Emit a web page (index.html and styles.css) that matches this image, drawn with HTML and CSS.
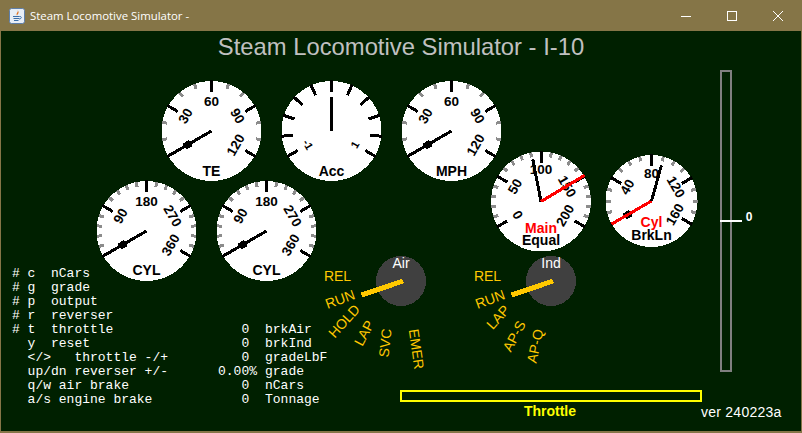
FILE: index.html
```html
<!DOCTYPE html>
<html lang="en">
<head>
  <meta charset="UTF-8">
  <title>Steam Locomotive Simulator</title>
  <link rel="stylesheet" href="styles.css">
</head>
<body>

<div class="window">
  <div class="titlebar">
    <svg class="app-icon" width="16" height="16" viewBox="0 0 16 16">
      <rect x="0.5" y="0.5" width="15" height="15" rx="2" fill="#e8eef6" stroke="#5f7fa8"/>
      <path d="M8.5 2 C10 4 6.5 5 8 7.5 C8.5 6 11 5 8.5 2 Z" fill="#e0701c"/>
      <path d="M4 8.5 H10.5 M4.5 10.5 H10 M5 12.5 H9.5" stroke="#3c6ea8" stroke-width="1.2" fill="none"/>
      <path d="M10.5 8.5 C13 8 13 11 10 11" stroke="#3c6ea8" fill="none"/>
    </svg>
    <span class="app-title">Steam Locomotive Simulator -</span>
    <div class="win-buttons">
      <svg width="12" height="12" viewBox="0 0 12 12"><path d="M1 6.5 H11" stroke="#fff" fill="none"/></svg>
      <svg width="12" height="12" viewBox="0 0 12 12"><rect x="1.5" y="1.5" width="9" height="9" stroke="#fff" fill="none"/></svg>
      <svg width="12" height="12" viewBox="0 0 12 12"><path d="M1 1 L11 11 M11 1 L1 11" stroke="#fff" fill="none"/></svg>
    </div>
  </div>

  <div class="panel">
    <svg id="dials" class="dials" width="800" height="400" viewBox="1 31 800 400"></svg>

    <div class="keys">
      <span># c  nCars</span><span></span><span></span>
      <span># g  grade</span><span></span><span></span>
      <span># p  output</span><span></span><span></span>
      <span># r  reverser</span><span></span><span></span>
      <span># t  throttle</span><span class="val">0 </span><span>brkAir</span>
      <span>  y  reset</span><span class="val">0 </span><span>brkInd</span>
      <span>  &lt;/&gt;   throttle -/+</span><span class="val">0 </span><span>gradeLbF</span>
      <span>  up/dn reverser +/-</span><span class="val">0.00%</span><span>grade</span>
      <span>  q/w air brake</span><span class="val">0 </span><span>nCars</span>
      <span>  a/s engine brake</span><span class="val">0 </span><span>Tonnage</span>
    </div>
  </div>
</div>

<script>
const svg = document.getElementById("dials");
let out = '';

function polar(cx, cy, r, deg) {
  const a = deg * Math.PI / 180;
  return [cx + r * Math.sin(a), cy - r * Math.cos(a)];
}

function line(x1, y1, x2, y2, color, w) {
  return `<line class="crisp" x1="${x1}" y1="${y1}" x2="${x2}" y2="${y2}" stroke="${color}" stroke-width="${w}"/>`;
}

function text(x, y, str, cls, rot) {
  const t = rot ? ` transform="rotate(${rot} ${x} ${y})"` : '';
  return `<text class="${cls}" x="${x}" y="${y}"${t}>${str}</text>`;
}

function needle(g, deg, len, color, blob) {
  const p = polar(g.x, g.y, len, deg);
  let s = line(g.x, g.y, p[0], p[1], color, 3);
  if (blob) {
    const a = polar(g.x, g.y, 24, deg), b = polar(g.x, g.y, 31, deg);
    s += line(a[0], a[1], b[0], b[1], color, 7);
  }
  return s;
}

function gauge(g) {
  const r = g.r || 50;
  let s = `<circle class="crisp" cx="${g.x}" cy="${g.y}" r="${r}" fill="#fff"/>`;

  // gri ara çizgiler
  if (g.minor) {
    for (let d = -120; d <= 120; d += g.minor) {
      if (d % 60 === 0) continue;
      const a = polar(g.x, g.y, r, d), b = polar(g.x, g.y, r - 5, d);
      s += line(a[0], a[1], b[0], b[1], '#8c8c8c', 3);
    }
  }
  (g.major || [-120, -60, 0, 60, 120]).forEach(d => {
    const a = polar(g.x, g.y, r + 1, d), b = polar(g.x, g.y, r - 11, d);
    s += line(a[0], a[1], b[0], b[1], '#000', 3);
  });

  (g.labels || []).forEach(l => {
    const p = polar(g.x, g.y, l[2] || g.labelR || 30, l[0]);
    const rot = Math.abs(l[0]) > 90 ? l[0] - Math.sign(l[0]) * 180 : l[0];
    s += text(p[0], p[1], l[1], g.smallLabels ? 'dial-num small' : 'dial-num', rot);
  });

  (g.needles || []).forEach(n => { s += needle(g, n[0], n[1], n[2], n[3]); });
  (g.captions || []).forEach(c => { s += text(g.x, c[0], c[1], 'caption ' + (c[2] || '')); });
  return s;
}

const lowNeedle = [[-120, 50, '#000', true]];

[
  { x: 211.5, y: 131, minor: 20, labels: [[-60, '30'], [0, '60'], [60, '90'], [120, '120', 28]], needles: lowNeedle, captions: [[176, 'TE']] },
  { x: 331.5, y: 131, major: [-120, -96, -72, -48, -24, 0, 24, 48, 72, 96, 120], smallLabels: true, labels: [[-120, '-1', 27], [120, '1', 27]], needles: [[0, 34, '#000']], captions: [[176, 'Acc']] },
  { x: 451.5, y: 131, minor: 20, labels: [[-60, '30'], [0, '60'], [60, '90'], [120, '120', 28]], needles: lowNeedle, captions: [[176, 'MPH']] },
  { x: 146.5, y: 231, minor: 12, labels: [[-60, '90'], [0, '180'], [60, '270'], [120, '360', 28]], needles: lowNeedle, captions: [[275, 'CYL']] },
  { x: 266.5, y: 231, minor: 12, labels: [[-60, '90'], [0, '180'], [60, '270'], [120, '360', 28]], needles: lowNeedle, captions: [[275, 'CYL']] },
  { x: 541, y: 201.5, minor: 12, labels: [[-120, '0', 27], [-60, '50'], [0, '100', 32], [60, '150'], [120, '200', 28]],
    needles: [[-11, 43, '#000'], [59, 51, '#f00']], captions: [[233, 'Main', 'red'], [245, 'Equal']] },
  { x: 651.5, y: 201, r: 46, minor: 15, labelR: 28, labels: [[-60, '40'], [0, '80'], [60, '120'], [120, '160', 27]],
    needles: [[-120, 46, '#000', true], [-120, 46, '#f00'], [15.5, 37, '#000']], captions: [[227, 'Cyl', 'red'], [240, 'BrkLn']] }
].forEach(g => { out += gauge(g); });

// fren kolları
function lever(cx, name, stops) {
  let s = `<circle class="crisp" cx="${cx}" cy="281" r="25" fill="#404040"/>`;
  s += text(cx, 268, name, 'knob-name');
  s += line(cx + 2, 281, cx - 39.5, 295, '#ffc800', 5);
  stops.forEach(st => { s += text(cx + st[0], st[1], st[2], 'stop', st[3]); });
  return s;
}

out += lever(401, 'Air', [
  [-63.5, 276, 'REL', 0], [-61, 299, 'RUN', -20], [-57, 321, 'HOLD', -48],
  [-37, 333, 'LAP', -62], [-16, 343, 'SVC', -84], [15.5, 349, 'EMER', 82]
]);
out += lever(551, 'Ind', [
  [-63.5, 276, 'REL', 0], [-61, 299, 'RUN', -20], [-53, 317, 'LAP', -48],
  [-37, 336, 'AP-S', -62], [-16, 346, 'AP-Q', -78]
]);

// başlık, geri vites çubuğu, gaz çubuğu
out += text(401, 55, 'Steam Locomotive Simulator - I-10', 'main-title');
out += '<rect class="crisp" x="721" y="71" width="10" height="300" fill="none" stroke="#808080" stroke-width="2"/>';
out += '<rect class="crisp" x="720" y="220" width="22" height="2" fill="#fff"/>';
out += text(749, 221, '0', 'rev-value');
out += '<rect class="crisp" x="401" y="391" width="300" height="10" fill="none" stroke="#ff0" stroke-width="2"/>';
out += text(550, 416, 'Throttle', 'throttle-name');
out += text(701, 417, 'ver 240223a', 'version');

svg.innerHTML = out;
</script>

</body>
</html>
```
FILE: styles.css
```css
html, body { margin: 0; padding: 0; background: #857547; }
.window { width: 802px; height: 433px; display: flex; flex-direction: column; overflow: hidden; }

.titlebar { height: 31px; flex: none; display: flex; align-items: center; padding-left: 9px; background: #857547; color: #fff; font: 11.4px "Open Sans", sans-serif; }
.app-icon { flex: none; margin-right: 5px; }
.win-buttons { margin-left: auto; display: flex; gap: 34px; padding-right: 18px; }
.win-buttons svg { display: block; }

.panel { position: relative; flex: none; width: 800px; height: 400px; margin: 0 1px; background: #002000; overflow: hidden; }
.dials { position: absolute; left: 0; top: 0; display: block; }
.crisp { shape-rendering: crispEdges; }

.keys { position: absolute; left: 11px; top: 236px; display: grid; grid-template-columns: 196px 41px auto; column-gap: 8px; color: #fff; font: 13px/14px "Liberation Mono", monospace; white-space: pre; }
.val { text-align: right; }

text { font-family: "Liberation Sans", Arial, sans-serif; text-anchor: middle; }
.main-title { font-size: 23.8px; fill: #c0c0c0; }
.dial-num { font-size: 13.5px; font-weight: bold; fill: #000; dominant-baseline: central; }
.dial-num.small { font-size: 11px; }
.caption { font-size: 14px; font-weight: bold; fill: #000; }
.caption.red { fill: #f00; }
.knob-name { font-size: 14px; fill: #fff; }
.stop { font-size: 14px; fill: #ffc800; dominant-baseline: central; }
.rev-value { font-size: 12px; font-weight: bold; fill: #fff; }
.throttle-name { font-size: 14px; font-weight: bold; fill: #ff0; }
.version { font-size: 14px; letter-spacing: 0.25px; fill: #fff; text-anchor: start; }
```
